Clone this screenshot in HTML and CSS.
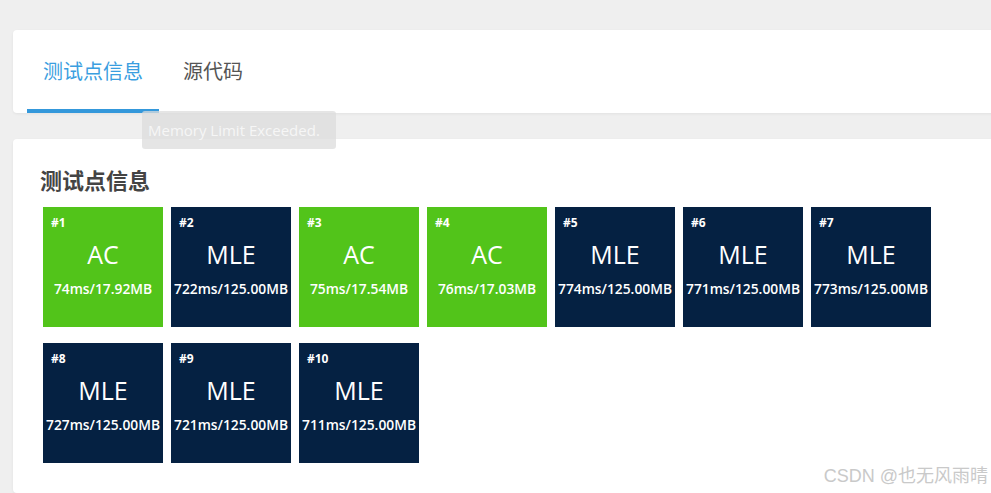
FILE: index.html
```html
<!DOCTYPE html>
<html>
<head>
<meta charset="utf-8">
<link rel="stylesheet" href="styles.css">
</head>
<body>
<div class="page">
  <div class="card tabs-card">
    <div class="tab active">测试点信息</div>
    <div class="tab">源代码</div>
    <div class="tooltip">Memory Limit Exceeded.</div>
  </div>
  <div class="card cases-card">
    <div class="title">测试点信息</div>
    <div class="grid">
      <div class="case ac"><div class="num">#1</div><div class="res">AC</div><div class="stat">74ms/17.92MB</div></div>
      <div class="case mle"><div class="num">#2</div><div class="res">MLE</div><div class="stat">722ms/125.00MB</div></div>
      <div class="case ac"><div class="num">#3</div><div class="res">AC</div><div class="stat">75ms/17.54MB</div></div>
      <div class="case ac"><div class="num">#4</div><div class="res">AC</div><div class="stat">76ms/17.03MB</div></div>
      <div class="case mle"><div class="num">#5</div><div class="res">MLE</div><div class="stat">774ms/125.00MB</div></div>
      <div class="case mle"><div class="num">#6</div><div class="res">MLE</div><div class="stat">771ms/125.00MB</div></div>
      <div class="case mle"><div class="num">#7</div><div class="res">MLE</div><div class="stat">773ms/125.00MB</div></div>
      <div class="case mle"><div class="num">#8</div><div class="res">MLE</div><div class="stat">727ms/125.00MB</div></div>
      <div class="case mle"><div class="num">#9</div><div class="res">MLE</div><div class="stat">721ms/125.00MB</div></div>
      <div class="case mle"><div class="num">#10</div><div class="res">MLE</div><div class="stat">711ms/125.00MB</div></div>
    </div>
  </div>
</div>
<div class="watermark">CSDN @也无风雨晴</div>
</body>
</html>
```
FILE: styles.css
```css
html, body {
  margin: 0;
  padding: 0;
}
body {
  background: #efefef;
  font-family: "Open Sans", "Noto Sans CJK SC", sans-serif;
  overflow: hidden;
  width: 991px;
  height: 493px;
  position: relative;
}
.page {
  padding: 30px 0 0 13px;
}
.card {
  background: #fff;
  border-radius: 4px;
  width: 1000px;
  box-shadow: 0 1px 3px rgba(0,0,0,0.06);
}
.tabs-card {
  height: 83px;
  box-sizing: border-box;
  padding-left: 14px;
  display: flex;
  gap: 8px;
  position: relative;
}
.tab {
  font-family: "Noto Sans CJK SC", sans-serif;
  font-size: 20px;
  color: #555;
  padding: 0 16px;
  display: flex;
  align-items: center;
  padding-top: 1px;
  box-sizing: border-box;
  height: 83px;
  border-bottom: 4px solid transparent;
}
.tab.active {
  color: #3a9ee0;
  border-bottom-color: #3498db;
}
.tooltip {
  position: absolute;
  left: 129px;
  top: 81px;
  width: 194px;
  height: 38px;
  box-sizing: border-box;
  background: rgba(220,220,220,0.75);
  border-radius: 3px;
  color: #f6f6f6;
  font-size: 15px;
  line-height: 38px;
  padding-left: 6px;
  white-space: nowrap;
}
.cases-card {
  margin-top: 26px;
  padding: 24px 0 0 27px;
  box-sizing: border-box;
  height: 354px;
}
.title {
  font-family: "Noto Sans CJK SC", sans-serif;
  font-weight: 700;
  font-size: 22px;
  line-height: 32px;
  color: #444;
}
.grid {
  display: flex;
  flex-wrap: wrap;
  gap: 16px 8px;
  margin-top: 12px;
  margin-left: 3px;
  width: 900px;
}
.case {
  width: 120px;
  height: 120px;
  box-sizing: border-box;
  padding: 8px;
  color: #fff;
  text-align: center;
}
.case.ac { background: #52c41a; }
.case.mle { background: #052142; }
.num {
  text-align: left;
  font-size: 12px;
  font-weight: 700;
  line-height: 16px;
}
.res {
  font-size: 25px;
  line-height: 30px;
  margin-top: 8px;
}
.stat {
  font-size: 13.8px;
  font-weight: 600;
  line-height: 20px;
  margin-top: 10px;
  margin-left: -8px;
  margin-right: -8px;
  white-space: nowrap;
}
.watermark {
  position: absolute;
  right: 3px;
  top: 461px;
  font-family: "Liberation Sans", "Noto Sans CJK SC", sans-serif;
  font-size: 18px;
  color: #c9c9c9;
}
```
